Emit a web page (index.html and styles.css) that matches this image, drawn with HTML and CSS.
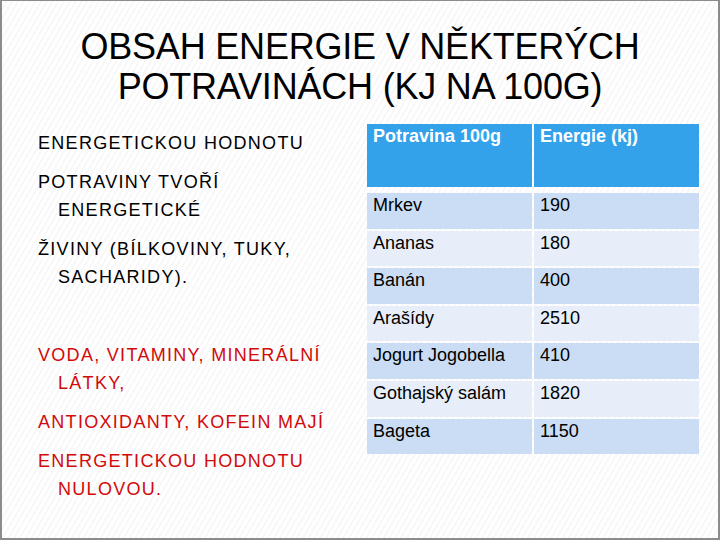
FILE: index.html
```html
<!DOCTYPE html>
<html lang="cs">
<head>
<meta charset="utf-8">
<title>Obsah energie</title>
<link rel="stylesheet" href="styles.css">
</head>
<body>
<div class="slide">
  <h1 class="title">OBSAH ENERGIE V NĚKTERÝCH<br>POTRAVINÁCH (KJ NA 100G)</h1>
  <div class="content">
    <div class="text">
      <p>ENERGETICKOU HODNOTU</p>
      <p>POTRAVINY TVOŘÍ ENERGETICKÉ</p>
      <p>ŽIVINY (BÍLKOVINY, TUKY, SACHARIDY).</p>
      <p class="empty"></p>
      <p class="red">VODA, VITAMINY, MINERÁLNÍ LÁTKY,</p>
      <p class="red">ANTIOXIDANTY, KOFEIN MAJÍ</p>
      <p class="red">ENERGETICKOU HODNOTU NULOVOU.</p>
    </div>
    <table class="food">
      <thead>
        <tr><th>Potravina 100g</th><th>Energie (kj)</th></tr>
      </thead>
      <tbody>
        <tr class="dark"><td>Mrkev</td><td>190</td></tr>
        <tr class="light"><td>Ananas</td><td>180</td></tr>
        <tr class="dark"><td>Banán</td><td>400</td></tr>
        <tr class="light"><td>Arašídy</td><td>2510</td></tr>
        <tr class="dark"><td>Jogurt Jogobella</td><td>410</td></tr>
        <tr class="light"><td>Gothajský salám</td><td>1820</td></tr>
        <tr class="dark"><td>Bageta</td><td>1150</td></tr>
      </tbody>
    </table>
  </div>
</div>
</body>
</html>
```
FILE: styles.css
```css
html, body {
  margin: 0;
  padding: 0;
  background: #fff;
}

.slide {
  box-sizing: border-box;
  width: 720px;
  height: 540px;
  border-top: 1px solid #8c8c8c;
  border-left: 2px solid #8c8c8c;
  border-right: 2px solid #8c8c8c;
  border-bottom: 2px solid #8c8c8c;
  background: repeating-linear-gradient(120deg, #ffffff 0 3px, #f8f8f8 3px 5px);
  font-family: "Liberation Sans", Arial, sans-serif;
  color: #000;
  overflow: hidden;
}

.title {
  margin: 0;
  padding-top: 26px;
  font-weight: normal;
  font-size: 36px;
  line-height: 40px;
  text-align: center;
  letter-spacing: -0.2px;
}

.content {
  display: grid;
  grid-template-columns: 327px auto;
  justify-content: start;
  padding-left: 36px;
  margin-top: 15px;
}

.text {
  width: 312px;
  padding-top: 7px;
  font-size: 18px;
  letter-spacing: 1.3px;
  line-height: 28px;
}

.text p {
  margin: 0 0 11px 0;
  padding-left: 20px;
  text-indent: -20px;
}

.text p.empty {
  height: 28px;
}

.text p.red {
  color: #d10a0a;
}

.food {
  justify-self: start;
  align-self: start;
  width: 336px;
  table-layout: fixed;
  border-collapse: separate;
  border-spacing: 2px;
  font-size: 18px;
  line-height: 21px;
}

.food th,
.food td {
  padding: 2px 6px 0 6px;
  text-align: left;
  vertical-align: top;
  overflow: hidden;
  white-space: nowrap;
}

.food th {
  height: 61px;
  background: #33a2ea;
  color: #fff;
  font-weight: bold;
  border-bottom: 4px solid transparent;
  background-clip: padding-box;
}

.food td {
  height: 33.6px;
}

.food tr.dark td {
  background: #cbddf5;
}

.food tr.light td {
  background: #e7eef9;
}
```
